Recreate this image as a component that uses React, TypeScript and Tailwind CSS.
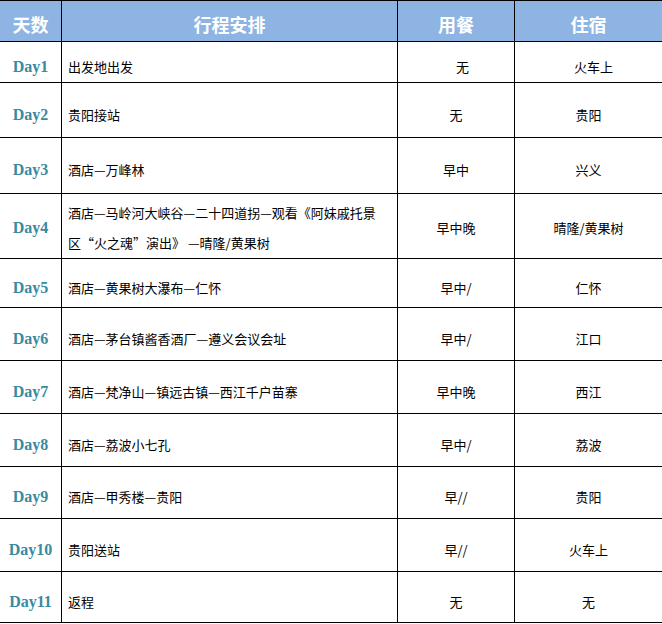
type Row = {
  day: string;
  plan: React.ReactNode;
  meal: string;
  stay: string;
  h: string;
  pad?: string;
  mealPad?: string;
  stayPad?: string;
};

const rows: Row[] = [
  { day: "Day1", plan: "出发地出发", meal: "无", stay: "火车上", h: "h-[41px]", mealPad: "pl-[13px]", stayPad: "pl-[10px]" },
  { day: "Day2", plan: "贵阳接站", meal: "无", stay: "贵阳", h: "h-[55px]" },
  { day: "Day3", plan: "酒店—万峰林", meal: "早中", stay: "兴义", h: "h-[56px]" },
  {
    day: "Day4",
    plan: (
      <span className="leading-[30px] whitespace-nowrap">
        酒店—马岭河大峡谷—二十四道拐—观看《阿妹戚托景
        <br />
        区“火之魂”演出》 —晴隆/黄果树
      </span>
    ),
    meal: "早中晚",
    stay: "晴隆/黄果树",
    h: "h-[65px]",
    pad: "pt-[4px]",
  },
  { day: "Day5", plan: "酒店—黄果树大瀑布—仁怀", meal: "早中/", stay: "仁怀", h: "h-[49px]" },
  { day: "Day6", plan: "酒店—茅台镇酱香酒厂—遵义会议会址", meal: "早中/", stay: "江口", h: "h-[53px]" },
  { day: "Day7", plan: "酒店—梵净山—镇远古镇—西江千户苗寨", meal: "早中晚", stay: "西江", h: "h-[53px]" },
  { day: "Day8", plan: "酒店—荔波小七孔", meal: "早中/", stay: "荔波", h: "h-[53px]" },
  { day: "Day9", plan: "酒店—甲秀楼—贵阳", meal: "早//", stay: "贵阳", h: "h-[52px]" },
  { day: "Day10", plan: "贵阳送站", meal: "早//", stay: "火车上", h: "h-[53px]" },
  { day: "Day11", plan: "返程", meal: "无", stay: "无", h: "h-[51px]" },
];

const cjk = "font-['Noto_Sans_CJK_SC','Noto_Sans',sans-serif]";
const cols = "grid grid-cols-[62px_336px_117px_147px]";

export default function App() {
  return (
    <div className={`w-[662px] bg-white text-black ${cjk}`}>
      {/* header */}
      <div className={`${cols} h-[42px] border-y border-black bg-[#8db4e2] text-white text-[18px] font-bold`}>
        <div className="flex items-center justify-center pt-[6px] border-r border-black">天数</div>
        <div className="flex items-center justify-center pt-[6px] border-r border-black">行程安排</div>
        <div className="flex items-center justify-center pt-[6px] border-r border-black">用餐</div>
        <div className="flex items-center justify-center pt-[6px]">住宿</div>
      </div>

      {rows.map((r) => {
        const pad = r.pad ?? "pt-[9px]";
        return (
          <div key={r.day} className={`${cols} ${r.h} border-b border-black text-[13px]`}>
            <div className={`flex items-center justify-center ${pad} border-r border-black font-['Liberation_Serif',serif] font-bold text-[16px] text-[#3a8aa2]`}>
              {r.day}
            </div>
            <div className={`flex items-center pl-[6px] ${pad} border-r border-black whitespace-nowrap`}>
              {r.plan}
            </div>
            <div className={`flex items-center justify-center ${pad} border-r border-black ${r.mealPad ?? ""}`}>
              {r.meal}
            </div>
            <div className={`flex items-center justify-center ${pad} ${r.stayPad ?? ""}`}>
              {r.stay}
            </div>
          </div>
        );
      })}
    </div>
  );
}
